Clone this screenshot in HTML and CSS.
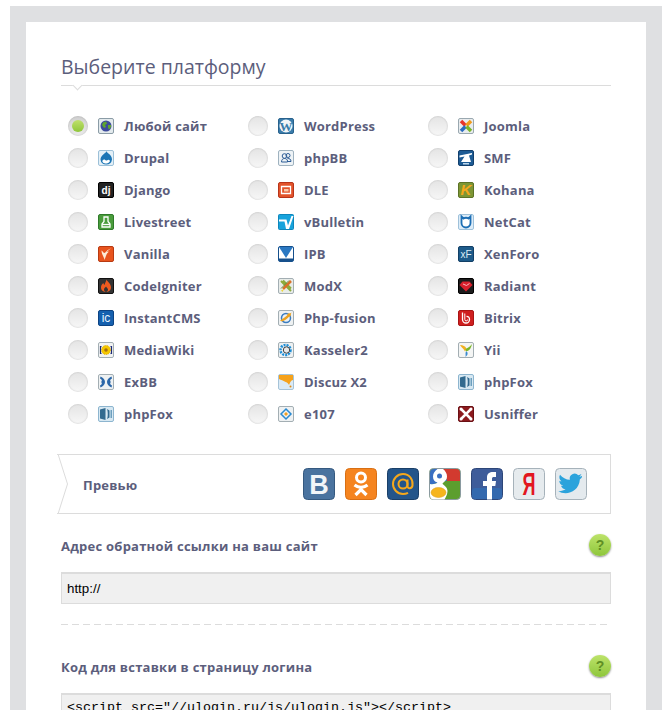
FILE: index.html
```html
<!DOCTYPE html>
<html lang="en">

<head>
    <meta charset="UTF-8">
    <title>Выберите платформу</title>
    <link rel="stylesheet" href="styles.css">
</head>

<body>
    <svg class="sprites" xmlns="http://www.w3.org/2000/svg">
        <!-- platform icons, 16x16 -->
        <symbol id="any" viewBox="0 0 16 16">
            <rect x=".5" y=".5" width="15" height="15" rx="1.5" fill="#e3eaed" stroke="#8b9ca6"/>
            <circle cx="8" cy="8" r="5.5" fill="#3d4a9c"/>
            <path d="M5 4.5l3-1 1 2-2 1.5 1 2-2 1-2-3zM10 7l3 0 0 2-2 2.5-1-2z" fill="#5fa52e"/>
        </symbol>
        <symbol id="drupal" viewBox="0 0 16 16">
            <rect x=".5" y=".5" width="15" height="15" rx="1.5" fill="#e4f0f7" stroke="#9cc0d8"/>
            <path d="M8.500 1c.5 2.500 5.500 3.500 5.500 8.500a5.800 5.800 0 0 1-11.500 0C2.500 5 8 3.500 8.500 1z" fill="#1b75b5"/>
            <path d="M4.500 10.500c1.500-2 2.800-.5 3.500 0s2.500-2 3.800 0c.7 1.500-1.800 3-3.800 3s-4.200-1.300-3.500-3z" fill="#fff"/>
        </symbol>
        <symbol id="django" viewBox="0 0 16 16">
            <rect x=".5" y=".5" width="15" height="15" rx="1.5" fill="#222" stroke="#000"/>
            <text x="8" y="11.500" class="ico-txt" font-size="10" fill="#fff">dj</text>
        </symbol>
        <symbol id="livestreet" viewBox="0 0 16 16">
            <rect x=".5" y=".5" width="15" height="15" rx="1.5" fill="#4a9c3c" stroke="#2f7a2a"/>
            <path d="M6 3h4v4.500l2 2.500v3H4v-3l2-2.500z" fill="none" stroke="#fff" stroke-width="1.300"/>
            <path d="M4 10.500h8" stroke="#fff" stroke-width="1.300"/>
        </symbol>
        <symbol id="vanilla" viewBox="0 0 16 16">
            <rect x=".5" y=".5" width="15" height="15" rx="1.5" fill="#e8541e" stroke="#b83a12"/>
            <path d="M13 2.500C9 3.500 7.500 7 6.500 7 5.500 7 4.500 5 3.500 4.500c0 4 2.500 6 3 9.500 1.500-4 2-7 5-8.500L9 6c1-1.500 2.500-2.500 4-3.500z" fill="#fdebd6"/>
        </symbol>
        <symbol id="codeigniter" viewBox="0 0 16 16">
            <rect x=".5" y=".5" width="15" height="15" rx="1.5" fill="#333" stroke="#111"/>
            <path d="M8.500 1.500c1 2.500 4.500 4 4.500 8 0 2.800-2.500 4.500-5 4.500s-5-1.700-5-4.500c0-2.300 1.200-3.500 2.500-4.500 0 1 .5 1.500 1 2 .5-2 1.500-3.500 2-5.500z" fill="#ee5a1f"/>
            <path d="M8 8.500c.5 1 2 1.800 2 3S9 14 8 14s-2-.8-2-2.500S7.500 9.500 8 8.500z" fill="#333"/>
        </symbol>
        <symbol id="instantcms" viewBox="0 0 16 16">
            <rect x=".5" y=".5" width="15" height="15" rx="1.5" fill="#1560ae" stroke="#0d4383"/>
            <text x="8" y="12" class="ico-txt ico-thin" font-size="12" fill="#e8f4ff">ic</text>
        </symbol>
        <symbol id="mediawiki" viewBox="0 0 16 16">
            <rect x=".5" y=".5" width="15" height="15" rx="1.5" fill="#f2f3f2" stroke="#a3aeb3"/>
            <path d="M3.500 4.500H2.500v7h1M12.500 4.500h1v7h-1" fill="none" stroke="#1b2a78" stroke-width="1.200"/>
            <circle cx="8" cy="8" r="4.500" fill="#f5c800" stroke="#e0a800" stroke-dasharray="1 1"/>
            <circle cx="8" cy="8" r="1.800" fill="#a87010"/>
        </symbol>
        <symbol id="exbb" viewBox="0 0 16 16">
            <rect x=".5" y=".5" width="15" height="15" rx="1.5" fill="#eef1f2" stroke="#a3aeb3"/>
            <path d="M2.500 2.500c2.500 1 4.500 3 4.500 5.500s-2 4.500-4.500 5.500L2 11.500C4 10.500 4.500 9 3 8c1.500-1 1-2.500-1-3.500zM13.500 2.500C11 3.500 9 5.500 9 8s2 4.500 4.500 5.500l.5-2c-2-1-2.500-2.500-1-3.500-1.500-1-1-2.500 1-3.500z" fill="#2a66a8"/>
        </symbol>
        <symbol id="phpfox" viewBox="0 0 16 16">
            <rect x=".5" y=".5" width="15" height="15" rx="1.5" fill="#d7e8f2" stroke="#8db5cf"/>
            <path d="M2 3.500l5.500-1.500v12L2 12.500z" fill="#326a8f"/>
            <path d="M9 3l2.500 1.500v7L9 13c1-2 1-8 0-10z" fill="#326a8f"/>
            <path d="M12.500 4h1.500v8h-1.500z" fill="#6d9fbe"/>
        </symbol>
        <symbol id="wordpress" viewBox="0 0 16 16">
            <rect x=".5" y=".5" width="15" height="15" rx="1.5" fill="#3a7cab" stroke="#28618c"/>
            <circle cx="8" cy="8" r="6.500" fill="#f1f5f8"/>
            <text x="8" y="12.500" class="ico-txt ico-serif" font-size="13" fill="#3a7cab">W</text>
        </symbol>
        <symbol id="phpbb" viewBox="0 0 16 16">
            <rect x=".5" y=".5" width="15" height="15" rx="1.5" fill="#eef3f6" stroke="#9fb2bf"/>
            <g fill="none" stroke="#2c5c96" stroke-width="1">
                <circle cx="6.500" cy="6" r="2.300"/>
                <circle cx="10" cy="5.500" r="2"/>
                <path d="M3.500 12c0-2.500 1.500-3.500 3-3.500s3 1 3 2.500v1zM9.500 8.500c2 0 3.500.5 3.500 3h-3.500"/>
            </g>
        </symbol>
        <symbol id="dle" viewBox="0 0 16 16">
            <rect x=".5" y=".5" width="15" height="15" rx="1.5" fill="#e2532a" stroke="#b8341a"/>
            <path d="M3.500 4.500h9v7h-9z" fill="none" stroke="#fff" stroke-width="1.300"/>
            <path d="M6 7h4.500v2.500H6z" fill="#f8c8a8"/>
        </symbol>
        <symbol id="vbulletin" viewBox="0 0 16 16">
            <rect x=".5" y=".5" width="15" height="15" rx="1" fill="#17a3dc" stroke="#0f86bb"/>
            <path d="M1 5.500h7.500l1.500 6 3.500-9.500h2L11 15H8L6.500 7.500H1z" fill="#fff"/>
        </symbol>
        <symbol id="ipb" viewBox="0 0 16 16">
            <rect x=".5" y=".5" width="15" height="15" rx="1.5" fill="#fff" stroke="#16508c"/>
            <rect x="1" y="12.500" width="14" height="2.500" fill="#16508c"/>
            <path d="M1 1l7 11 7-11z" fill="#2a78c2"/>
        </symbol>
        <symbol id="modx" viewBox="0 0 16 16">
            <rect x=".5" y=".5" width="15" height="15" rx="1.5" fill="#e8ece9" stroke="#a3aeb3"/>
            <path d="M3 3l10 10M5 2.500l8 8" stroke="#8cab3c" stroke-width="2"/>
            <path d="M13 3L5 11" stroke="#d9702a" stroke-width="2.500"/>
            <path d="M11 2.500L3 10.500" stroke="#6a8f3a" stroke-width="1"/>
            <path d="M3 12.500l3-1.500-1.500 3z" fill="#ecd63a"/>
        </symbol>
        <symbol id="phpfusion" viewBox="0 0 16 16">
            <rect x=".5" y=".5" width="15" height="15" rx="1.5" fill="#eef1f2" stroke="#a3aeb3"/>
            <circle cx="8" cy="8" r="4.500" fill="none" stroke="#3a7cc0" stroke-width="1.500"/>
            <path d="M2 10.500C5 9 9 5 13.500 2.500c-1 3.500-5 7.500-9.500 9z" fill="#eca21f"/>
            <circle cx="11" cy="5" r="1.800" fill="#eca21f"/>
        </symbol>
        <symbol id="kasseler" viewBox="0 0 16 16">
            <rect x=".5" y=".5" width="15" height="15" rx="1.5" fill="#eef1f2" stroke="#a3aeb3"/>
            <circle cx="7.500" cy="8" r="5" fill="none" stroke="#1f8ed6" stroke-width="2.500" stroke-dasharray="2 1"/>
            <circle cx="8.500" cy="8" r="3.200" fill="#e8e8e8" stroke="#444"/>
        </symbol>
        <symbol id="discuz" viewBox="0 0 16 16">
            <rect x=".5" y=".5" width="15" height="15" rx="1.5" fill="#dbeaf5" stroke="#a5c3d8"/>
            <path d="M1 1h14v5c-2 0-3 3-4 5-1-3-6-4-10-6z" fill="#f6a21b"/>
            <circle cx="12.500" cy="12.500" r="1" fill="#e08a10"/>
        </symbol>
        <symbol id="e107" viewBox="0 0 16 16">
            <rect x=".5" y=".5" width="15" height="15" rx="1.5" fill="#eef1f2" stroke="#a3aeb3"/>
            <path d="M8 3l5 5-5 5-5-5z" fill="none" stroke="#2a8ad0" stroke-width="1.500"/>
            <path d="M8 6l2 2-2 2-2-2z" fill="#f0a020"/>
        </symbol>
        <symbol id="joomla" viewBox="0 0 16 16">
            <rect x=".5" y=".5" width="15" height="15" rx="1.5" fill="#e8ecee" stroke="#9aa8b0"/>
            <path d="M3 3l4.500 4.500" stroke="#e8342a" stroke-width="3.500"/>
            <path d="M13 3L8.500 7.500" stroke="#f09a1a" stroke-width="3.500"/>
            <path d="M3 13l4.500-4.500" stroke="#2a6cc0" stroke-width="3.500"/>
            <path d="M13 13L8.500 8.500" stroke="#7ab52a" stroke-width="3.500"/>
        </symbol>
        <symbol id="smf" viewBox="0 0 16 16">
            <rect x=".5" y=".5" width="15" height="15" rx="1.5" fill="#1d5b94" stroke="#123f6c"/>
            <path d="M1.500 5.500L14 3v1.500l-3 1L13 12H3l3.500-5.500-5 1z" fill="#fff"/>
            <path d="M5 13h6v1.500H5z" fill="#bcd6ea"/>
        </symbol>
        <symbol id="kohana" viewBox="0 0 16 16">
            <rect x=".5" y=".5" width="15" height="15" rx="1.5" fill="#7d9634" stroke="#5c7226"/>
            <text x="8" y="13" class="ico-txt" font-size="15" font-style="italic" fill="#f5a81c">K</text>
        </symbol>
        <symbol id="netcat" viewBox="0 0 16 16">
            <rect x=".5" y=".5" width="15" height="15" rx="1.5" fill="#dcecf8" stroke="#9fc1da"/>
            <path d="M3.500 2.500l2 2a4.800 4.800 0 0 1 5 0l2-2v6.500a4.500 4.500 0 0 1-9 0z" fill="#fff" stroke="#1d6fb5" stroke-width="1.800"/>
        </symbol>
        <symbol id="xenforo" viewBox="0 0 16 16">
            <rect x=".5" y=".5" width="15" height="15" rx="1.5" fill="#1d5b8a" stroke="#123f66"/>
            <text x="8" y="11.500" class="ico-txt ico-thin" font-size="10" fill="#dcecf7">xF</text>
        </symbol>
        <symbol id="radiant" viewBox="0 0 16 16">
            <rect x=".5" y=".5" width="15" height="15" rx="1.5" fill="#1c1c1c" stroke="#000"/>
            <path d="M1.500 7l3-3.500h7L14.500 7 8 13.500z" fill="#d8202c"/>
            <path d="M5 6l3.500 1.500 3-2" fill="none" stroke="#f8b8bc"/>
        </symbol>
        <symbol id="bitrix" viewBox="0 0 16 16">
            <rect x=".5" y=".5" width="15" height="15" rx="1.5" fill="#cf1f1f" stroke="#a81414"/>
            <path d="M4.500 2.500v7a3.500 3.500 0 0 0 7 0c0-2-1.300-3.200-3-3.200" fill="none" stroke="#fff" stroke-width="1.300"/>
            <path d="M6.800 3.500v6a1.400 1.400 0 0 0 2.800 0" fill="none" stroke="#fff"/>
        </symbol>
        <symbol id="yii" viewBox="0 0 16 16">
            <rect x=".5" y=".5" width="15" height="15" rx="1.5" fill="#f4f5f4" stroke="#a3aeb3"/>
            <path d="M2 3c3 0 5.500 1 6.500 4L7 9.500C6 7 3.500 5.500 2 3z" fill="#f0b020"/>
            <path d="M14 2C13 6 12 8.500 8 9.500L7.500 7c2.500-1 5-3 6.500-5z" fill="#7ab52a"/>
            <path d="M8 9.500c1.500 0 2 1.500 1.300 3.500L7.500 15C8 12.500 7 11 8 9.500z" fill="#3a8ad0"/>
        </symbol>
        <symbol id="usniffer" viewBox="0 0 16 16">
            <rect x=".5" y=".5" width="15" height="15" rx="1.5" fill="#8c1a1e" stroke="#6a1014"/>
            <path d="M3 3l10 10M13 3L3 13" stroke="#fff" stroke-width="2.500"/>
            <circle cx="3" cy="3" r="1.500" fill="#fff"/><circle cx="13" cy="13" r="1.500" fill="#fff"/>
            <circle cx="13" cy="3" r="1.500" fill="#fff"/><circle cx="3" cy="13" r="1.500" fill="#fff"/>
        </symbol>

        <!-- social buttons, 32x32 -->
        <symbol id="s-vk" viewBox="0 0 32 32">
            <rect x=".5" y=".5" width="31" height="31" rx="4" fill="#4a739f" stroke="#35597f"/>
            <text x="16" y="26" class="ico-txt" font-size="27" fill="#f2f5f8">В</text>
        </symbol>
        <symbol id="s-ok" viewBox="0 0 32 32">
            <rect x=".5" y=".5" width="31" height="31" rx="4" fill="#f5841f" stroke="#d86f14"/>
            <circle cx="16" cy="9.500" r="4.500" fill="none" stroke="#fff" stroke-width="3"/>
            <path d="M9.500 17c4 3 9 3 13 0M16 19.500v2M10.500 27l5.500-5.500 5.500 5.500" fill="none" stroke="#fff" stroke-width="3.200"/>
        </symbol>
        <symbol id="s-mail" viewBox="0 0 32 32">
            <rect x=".5" y=".5" width="31" height="31" rx="4" fill="#24558a" stroke="#1a3f68"/>
            <circle cx="16" cy="16" r="4.500" fill="none" stroke="#f5a81c" stroke-width="2"/>
            <path d="M20.500 11.500v6.500c0 3 4.500 3 5-.5.800-6-3-11.500-9.500-11.500a10 10 0 0 0 0 20c2 0 3.500-.4 5-1.200" fill="none" stroke="#f5a81c" stroke-width="2"/>
        </symbol>
        <symbol id="s-google" viewBox="0 0 32 32">
            <rect x=".5" y=".5" width="31" height="31" rx="4" fill="#5c9e2e" stroke="#8a9aa0"/>
            <path d="M14 1h13a4 4 0 0 1 4 4v8H18z" fill="#d23a2f"/>
            <path d="M1 5a4 4 0 0 1 4-4h9l4 12-17 4z" fill="#3a6fc2"/>
            <path d="M1 17l17-4h3v7H1z" fill="#5c9e2e"/>
            <path d="M8.500 1h5.500c2.500 2 4 4.500 4 7.500 0 3-1.500 4-3 5.500l-1.500 1.500c0 1 5 3 5 7.500 0 3-1.500 6-3 8.500H5a4 4 0 0 1-4-4V16c3 .5 6 0 7.500-1.500-3-1-4.500-2.500-4.500-6S6 3 8.500 1z" fill="#fff"/>
            <circle cx="10.500" cy="8" r="2.500" fill="#3a6fc2"/>
            <ellipse cx="9.500" cy="24.500" rx="7.500" ry="5" fill="#f6b51e" stroke="#d99a10" stroke-width=".5"/>
        </symbol>
        <symbol id="s-fb" viewBox="0 0 32 32">
            <rect x=".5" y=".5" width="31" height="31" rx="4" fill="#3e5c9a" stroke="#2d4678"/>
            <rect x="1" y="20" width="30" height="11" rx="3" fill="#3469ae"/>
            <path d="M16 31.500V18h-4v-5h4V9.500C16 5.500 18.500 4 22 4h3v5h-2c-1.500 0-2 .5-2 2v2h4l-.7 5H21v13.500z" fill="#fff"/>
        </symbol>
        <symbol id="s-ya" viewBox="0 0 32 32">
            <rect x=".5" y=".5" width="31" height="31" rx="4" fill="#e6ebee" stroke="#a6b2ba"/>
            <text x="16" y="27" class="ico-txt" font-size="31" fill="#e2171f" textLength="13" lengthAdjust="spacingAndGlyphs">Я</text>
        </symbol>
        <symbol id="s-tw" viewBox="0 0 32 32">
            <rect x=".5" y=".5" width="31" height="31" rx="4" fill="#e4eaee" stroke="#a6b2ba"/>
            <path d="M27 8c-1 .5-1.800.7-2.800.8 1-.6 1.800-1.600 2.200-2.700-1 .6-2 1-3.100 1.200a4.900 4.900 0 0 0-8.400 4.500C11 11.600 7.400 9.700 5 6.700c-1.300 2.300-.6 5.100 1.500 6.600-.8 0-1.500-.2-2.200-.6 0 2.400 1.700 4.400 3.900 4.900-.7.200-1.500.2-2.200.1.600 2 2.400 3.400 4.600 3.400-2.100 1.600-4.800 2.400-7.300 2.100 7 4.500 20.500 1.800 21.600-11.900.9-.7 1.700-1.500 2.100-2.300z" fill="#2ba3dc"/>
        </symbol>
    </svg>

    <div class="frame">
        <div class="card">
            <h1 class="title">Выберите платформу</h1>

            <div class="platforms">
                <div class="platform"><span class="radio checked"></span><svg class="ico"><use href="#any"/></svg><span class="name">Любой сайт</span></div>
                <div class="platform"><span class="radio"></span><svg class="ico"><use href="#wordpress"/></svg><span class="name">WordPress</span></div>
                <div class="platform"><span class="radio"></span><svg class="ico"><use href="#joomla"/></svg><span class="name">Joomla</span></div>
                <div class="platform"><span class="radio"></span><svg class="ico"><use href="#drupal"/></svg><span class="name">Drupal</span></div>
                <div class="platform"><span class="radio"></span><svg class="ico"><use href="#phpbb"/></svg><span class="name">phpBB</span></div>
                <div class="platform"><span class="radio"></span><svg class="ico"><use href="#smf"/></svg><span class="name">SMF</span></div>
                <div class="platform"><span class="radio"></span><svg class="ico"><use href="#django"/></svg><span class="name">Django</span></div>
                <div class="platform"><span class="radio"></span><svg class="ico"><use href="#dle"/></svg><span class="name">DLE</span></div>
                <div class="platform"><span class="radio"></span><svg class="ico"><use href="#kohana"/></svg><span class="name">Kohana</span></div>
                <div class="platform"><span class="radio"></span><svg class="ico"><use href="#livestreet"/></svg><span class="name">Livestreet</span></div>
                <div class="platform"><span class="radio"></span><svg class="ico"><use href="#vbulletin"/></svg><span class="name">vBulletin</span></div>
                <div class="platform"><span class="radio"></span><svg class="ico"><use href="#netcat"/></svg><span class="name">NetCat</span></div>
                <div class="platform"><span class="radio"></span><svg class="ico"><use href="#vanilla"/></svg><span class="name">Vanilla</span></div>
                <div class="platform"><span class="radio"></span><svg class="ico"><use href="#ipb"/></svg><span class="name">IPB</span></div>
                <div class="platform"><span class="radio"></span><svg class="ico"><use href="#xenforo"/></svg><span class="name">XenForo</span></div>
                <div class="platform"><span class="radio"></span><svg class="ico"><use href="#codeigniter"/></svg><span class="name">CodeIgniter</span></div>
                <div class="platform"><span class="radio"></span><svg class="ico"><use href="#modx"/></svg><span class="name">ModX</span></div>
                <div class="platform"><span class="radio"></span><svg class="ico"><use href="#radiant"/></svg><span class="name">Radiant</span></div>
                <div class="platform"><span class="radio"></span><svg class="ico"><use href="#instantcms"/></svg><span class="name">InstantCMS</span></div>
                <div class="platform"><span class="radio"></span><svg class="ico"><use href="#phpfusion"/></svg><span class="name">Php-fusion</span></div>
                <div class="platform"><span class="radio"></span><svg class="ico"><use href="#bitrix"/></svg><span class="name">Bitrix</span></div>
                <div class="platform"><span class="radio"></span><svg class="ico"><use href="#mediawiki"/></svg><span class="name">MediaWiki</span></div>
                <div class="platform"><span class="radio"></span><svg class="ico"><use href="#kasseler"/></svg><span class="name">Kasseler2</span></div>
                <div class="platform"><span class="radio"></span><svg class="ico"><use href="#yii"/></svg><span class="name">Yii</span></div>
                <div class="platform"><span class="radio"></span><svg class="ico"><use href="#exbb"/></svg><span class="name">ExBB</span></div>
                <div class="platform"><span class="radio"></span><svg class="ico"><use href="#discuz"/></svg><span class="name">Discuz X2</span></div>
                <div class="platform"><span class="radio"></span><svg class="ico"><use href="#phpfox"/></svg><span class="name">phpFox</span></div>
                <div class="platform"><span class="radio"></span><svg class="ico"><use href="#phpfox"/></svg><span class="name">phpFox</span></div>
                <div class="platform"><span class="radio"></span><svg class="ico"><use href="#e107"/></svg><span class="name">e107</span></div>
                <div class="platform"><span class="radio"></span><svg class="ico"><use href="#usniffer"/></svg><span class="name">Usniffer</span></div>
            </div>

            <!-- Preview ribbon -->
            <div class="preview">
                <svg class="ribbon" viewBox="0 0 12 60" width="12" height="60">
                    <path d="M1 0L10.500 30 1 60" fill="#fff" stroke="#dcdcdc"/>
                </svg>
                <span class="preview-label">Превью</span>
                <div class="socials">
                    <svg class="social"><use href="#s-vk"/></svg>
                    <svg class="social"><use href="#s-ok"/></svg>
                    <svg class="social"><use href="#s-mail"/></svg>
                    <svg class="social"><use href="#s-google"/></svg>
                    <svg class="social"><use href="#s-fb"/></svg>
                    <svg class="social"><use href="#s-ya"/></svg>
                    <svg class="social"><use href="#s-tw"/></svg>
                </div>
            </div>

            <div class="field-head first">
                <span class="field-label">Адрес обратной ссылки на ваш сайт</span>
                <span class="help">?</span>
            </div>
            <div class="field">http://</div>

            <div class="dashed"></div>

            <div class="field-head second">
                <span class="field-label">Код для вставки в страницу логина</span>
                <span class="help">?</span>
            </div>
            <div class="field code">&lt;script src="//ulogin.ru/js/ulogin.js"&gt;&lt;/script&gt;</div>
        </div>
    </div>
</body>

</html>
```

FILE: styles.css
```css
html,
body {
    height: 710px;
    overflow: hidden;
}

body {
    margin: 0;
    background-color: white;
    font-family: "Open Sans", "Noto Sans", sans-serif;
    color: #5c5e7c;
}

.sprites {
    display: none;
}

.ico-txt {
    font-family: "Liberation Sans", sans-serif;
    font-weight: bold;
    text-anchor: middle;
}

.ico-serif {
    font-family: "Liberation Serif", serif;
}

.ico-thin {
    font-weight: normal;
}

.frame {
    margin: 6px 6px 0 10px;
    padding: 16px 16px 0;
    background-color: #dfe0e2;
}

.card {
    padding: 31px 35px 40px;
    background-color: white;
}

.title {
    position: relative;
    margin: 0;
    padding-bottom: 4px;
    border-bottom: 1px solid #dcdcdc;
    font-size: 19.5px;
    font-weight: 400;
    line-height: 28px;
}

/* little notch under the heading */
.title::after {
    content: "";
    position: absolute;
    left: 13px;
    bottom: -4px;
    width: 6px;
    height: 6px;
    background-color: white;
    border-right: 1px solid #dcdcdc;
    border-bottom: 1px solid #dcdcdc;
    transform: rotate(45deg);
}

.platforms {
    display: grid;
    grid-template-columns: repeat(3, 180px);
    grid-auto-rows: 32px;
    margin-top: 24px;
    padding-left: 7px;
}

.platform {
    display: flex;
    align-items: center;
}

.radio {
    flex: none;
    width: 20px;
    height: 20px;
    border-radius: 50%;
    background: linear-gradient(#e4e4e4, #f7f7f7);
    box-shadow: inset 0 0 2px rgba(0, 0, 0, 0.2);
}

.radio.checked {
    display: flex;
    align-items: center;
    justify-content: center;
    background: linear-gradient(#cfcfcf, #ececec);
}

.radio.checked::before {
    content: "";
    width: 12px;
    height: 12px;
    border-radius: 50%;
    background: linear-gradient(#bfe06c, #8fc63a);
}

.ico {
    flex: none;
    width: 16px;
    height: 16px;
    margin: 0 10px;
}

.name {
    font-size: 13px;
    font-weight: 700;
    letter-spacing: 0.2px;
    white-space: nowrap;
}

.preview {
    position: relative;
    display: flex;
    align-items: center;
    height: 58px;
    margin: 24px 0 0 -4px;
    padding-left: 26px;
    border: 1px solid #dcdcdc;
    border-left: 0;
}

.ribbon {
    position: absolute;
    left: 0;
    top: -1px;
}

.preview-label {
    padding-top: 2px;
    font-size: 13px;
    font-weight: 700;
    letter-spacing: 0.2px;
}

.socials {
    display: flex;
    gap: 10px;
    margin-left: auto;
    margin-right: 23px;
}

.social {
    width: 32px;
    height: 32px;
}

.field-head {
    display: flex;
    align-items: center;
    justify-content: space-between;
    height: 22px;
}

.field-head.first {
    margin-top: 20px;
}

.field-head.second {
    margin-top: 30px;
}

.field-label {
    padding-top: 2px;
    font-size: 13px;
    font-weight: 700;
    letter-spacing: 0.24px;
}

.help {
    width: 22px;
    height: 22px;
    border-radius: 50%;
    background: linear-gradient(#bde36a, #8ec63c);
    box-shadow: 0 1px 2px rgba(0, 0, 0, 0.45);
    color: #5f8f24;
    font-family: "Liberation Sans", sans-serif;
    font-size: 14px;
    font-weight: bold;
    line-height: 22px;
    text-align: center;
}

.field {
    height: 29px;
    margin-top: 16px;
    padding-left: 5px;
    border: 1px solid #dcdcdc;
    border-top-width: 2px;
    background-color: #f0f0f0;
    color: black;
    font-family: "Liberation Sans", sans-serif;
    font-size: 13.33px;
    line-height: 29px;
}

.field.code {
    height: 60px;
    font-family: "Liberation Mono", monospace;
    font-size: 13.33px;
    line-height: 26px;
}

.dashed {
    width: 546px;
    height: 1px;
    margin-top: 20px;
    background: repeating-linear-gradient(to right, #dcdcdc 0 7px, transparent 7px 11px);
}
```
